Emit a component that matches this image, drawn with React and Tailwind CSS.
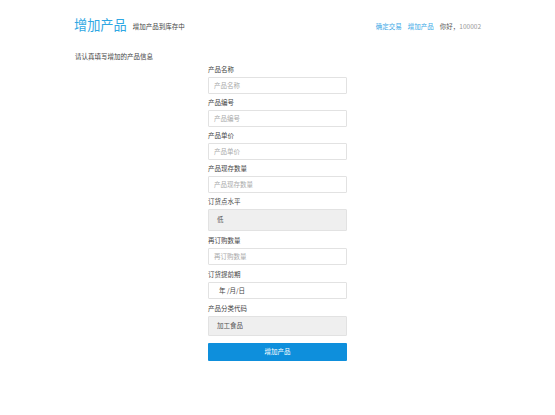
import React from "react";

const Label = ({ children }) => (
  <div className="h-[8px] leading-[8px] text-[6.5px] text-[#444] mb-[4px]">{children}</div>
);

const Input = ({ placeholder }) => (
  <div className="h-[17px] border border-[#e2e2e2] rounded-[1px] bg-white flex items-center pl-[5px] text-[6.5px] text-[#aaa]">
    {placeholder}
  </div>
);

const Gray = ({ value, h }) => (
  <div className={`${h} border border-[#e2e2e2] rounded-[1px] bg-[#efefef] flex items-center pl-[8px] text-[6.5px] text-[#555]`}>
    {value}
  </div>
);

export default function App() {
  return (
    <div className="w-[555px] h-[415px] bg-white overflow-hidden" style={{ fontFamily: '"Noto Sans CJK SC", "Noto Sans", sans-serif' }}>
      <div className="flex items-end justify-between pl-[74px] pr-[74px] pt-[17px]">
        <div className="flex items-end">
          <span className="text-[13.2px] leading-[16px] text-[#2fa7e3]">增加产品</span>
          <span className="ml-[6px] mb-[3px] text-[6.5px] leading-[8px] text-[#444]">增加产品到库存中</span>
        </div>
        <div className="flex items-center mb-[3px] text-[6.5px] leading-[8px]">
          <span className="text-[#3aa8e6]">确定交易</span>
          <span className="ml-[6px] text-[#3aa8e6]">增加产品</span>
          <span className="ml-[6px] text-[#555]">你好，<span className="text-[#999]">100002</span></span>
        </div>
      </div>
      <div className="pl-[75px] mt-[19px] text-[6.5px] leading-[8px] text-[#444]">请认真填写增加的产品信息</div>
      <div className="ml-[208px] w-[139px] mt-[5px] flex flex-col">
        <Label>产品名称</Label>
        <Input placeholder="产品名称" />
        <div className="h-[4px]" />
        <Label>产品编号</Label>
        <Input placeholder="产品编号" />
        <div className="h-[4px]" />
        <Label>产品单价</Label>
        <Input placeholder="产品单价" />
        <div className="h-[4px]" />
        <Label>产品现存数量</Label>
        <Input placeholder="产品现存数量" />
        <div className="h-[4px]" />
        <Label>订货点水平</Label>
        <Gray value="低" h="h-[22px]" />
        <div className="h-[5px]" />
        <Label>再订购数量</Label>
        <Input placeholder="再订购数量" />
        <div className="h-[5px]" />
        <Label>订货提前期</Label>
        <div className="h-[17px] border border-[#e2e2e2] rounded-[1px] bg-white flex items-center pl-[10px] text-[6.5px] text-[#444]">
          年 /月/日
        </div>
        <div className="h-[5px]" />
        <Label>产品分类代码</Label>
        <Gray value="加工食品" h="h-[20px]" />
        <div className="h-[7px]" />
        <div className="h-[18px] bg-[#0e8fdc] rounded-[1px] flex items-center justify-center text-[6.5px] text-white">增加产品</div>
      </div>
    </div>
  );
}
